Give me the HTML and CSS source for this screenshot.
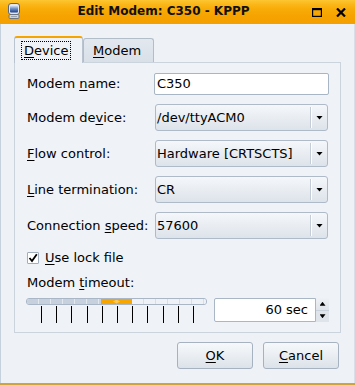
FILE: index.html
```html
<!DOCTYPE html>
<html>
<head>
<meta charset="utf-8">
<title>Edit Modem: C350 - KPPP</title>
<link rel="stylesheet" href="styles.css">
</head>
<body>
<div class="window">
  <div class="titlebar">
    <svg class="appicon" width="12" height="16" viewBox="0 0 12 16">
      <defs>
        <linearGradient id="scr" x1="0" y1="0" x2="0" y2="1">
          <stop offset="0" stop-color="#dfe8f4"/>
          <stop offset="0.45" stop-color="#6f8fc4"/>
          <stop offset="1" stop-color="#1d3f8a"/>
        </linearGradient>
      </defs>
      <rect x="0.5" y="0.5" width="11" height="11" rx="2.5" fill="#e4e7ec" stroke="#5d6675"/>
      <rect x="2" y="2.5" width="8" height="7" rx="1" fill="url(#scr)"/>
      <rect x="1" y="11.5" width="10" height="4" rx="1" fill="#cfd4db" stroke="#6c7482"/>
      <rect x="3" y="13" width="6" height="1" fill="#9aa2ae"/>
    </svg>
    <div class="title">Edit Modem: C350 - KPPP</div>
    <div class="wbtns">
      <svg class="wbtn" width="10" height="9" viewBox="0 0 10 9">
        <rect x="0.5" y="0.5" width="9" height="8" fill="none" stroke="#000" stroke-width="1.4"/>
        <rect x="0" y="0" width="10" height="2.2" fill="#000"/>
      </svg>
      <svg class="wbtn" width="10" height="9" viewBox="0 0 10 9">
        <path d="M1 0.5 L9 8.5 M9 0.5 L1 8.5" stroke="#000" stroke-width="2.2" fill="none"/>
      </svg>
    </div>
  </div>

  <div class="content">
    <div class="tabs">
      <div class="tab active"><span class="tabtext focus"><u>D</u>evice</span></div>
      <div class="tab"><span class="tabtext"><u>M</u>odem</span></div>
    </div>

    <div class="panel">
      <div class="form">
        <label class="lbl">Modem <u>n</u>ame:</label>
        <div class="input">C350</div>

        <label class="lbl">Modem de<u>v</u>ice:</label>
        <div class="combo"><span class="ctext">/dev/ttyACM0</span><span class="sep"></span><span class="arrow"></span></div>

        <label class="lbl"><u>F</u>low control:</label>
        <div class="combo"><span class="ctext">Hardware [CRTSCTS]</span><span class="sep"></span><span class="arrow"></span></div>

        <label class="lbl"><u>L</u>ine termination:</label>
        <div class="combo"><span class="ctext">CR</span><span class="sep"></span><span class="arrow"></span></div>

        <label class="lbl">Connection <u>s</u>peed:</label>
        <div class="combo"><span class="ctext">57600</span><span class="sep"></span><span class="arrow"></span></div>
      </div>

      <div class="check">
        <span class="box">
          <svg width="10" height="10" viewBox="0 0 10 10"><path d="M1.5 5 L4 8 L8.8 1.2" stroke="#000" stroke-width="1.8" fill="none"/></svg>
        </span>
        <span><u>U</u>se lock file</span>
      </div>

      <div class="tlabel">Modem <u>t</u>imeout:</div>

      <div class="sliderrow">
        <div class="slider">
          <div class="groove">
            <div class="fill"></div>
            <div class="handle"></div>
            <div class="rest"></div>
          </div>
          <div class="ticks">
            <i></i><i></i><i></i><i></i><i></i><i></i><i></i><i></i><i></i><i></i><i></i>
          </div>
        </div>
        <div class="spin">
          <div class="spinfield">60 sec</div>
          <div class="spinbtns">
            <div class="sb"><span class="up"></span></div>
            <div class="sb"><span class="down"></span></div>
          </div>
        </div>
      </div>
    </div>

    <div class="buttons">
      <div class="btn"><u>O</u>K</div>
      <div class="btn"><u>C</u>ancel</div>
    </div>
  </div>
</div>
</body>
</html>
```

FILE: styles.css
```css
* { box-sizing: border-box; }

html, body {
  margin: 0;
  padding: 0;
}

body {
  width: 355px;
  height: 385px;
  overflow: hidden;
  font-family: "DejaVu Sans", "Noto Sans", sans-serif;
  font-size: 13px;
  color: #000;
  background: #eef1f6;
}

u {
  text-decoration: underline;
  text-underline-offset: 2px;
  text-decoration-thickness: 1px;
}

.window {
  width: 355px;
  height: 385px;
  display: flex;
  flex-direction: column;
  background: #eef1f6;
  border-bottom: 2px solid #d0a43c;
}

/* ---------- title bar ---------- */
.titlebar {
  height: 24px;
  flex: none;
  display: flex;
  align-items: flex-start;
  padding: 0 8px 0 8px;
  background: linear-gradient(to bottom, #fdc631 0px, #fbb81a 4px, #f8ab07 9px, #f6a300 16px, #f4a000 24px);
}

.appicon {
  margin-top: 3px;
  flex: none;
}

.title {
  flex: 1;
  text-align: center;
  font-weight: bold;
  font-size: 12px;
  line-height: 22px;
  color: #111;
  padding-left: 2px;
}

.wbtns {
  width: 42px;
  flex: none;
  display: flex;
  align-items: center;
  gap: 14px;
  padding-left: 7px;
  margin-top: 8px;
}

.wbtn { display: block; flex: none; }

/* ---------- content ---------- */
.content {
  flex: 1;
  display: flex;
  flex-direction: column;
  padding: 12px 13px 0 13px;
  border-left: 1px solid #c6d1de;
  border-right: 1px solid #d9dfe7;
}

.tabs {
  display: flex;
  align-items: flex-start;
  height: 27px;
  margin-bottom: -1px;
}

.tab {
  height: 24px;
  margin-top: 2px;
  width: 71px;
  padding-left: 6px;
  background: linear-gradient(to bottom, #e3e8ef, #d9e0e8);
  border: 1px solid #b2bdca;
  border-bottom: none;
  border-radius: 3px 3px 0 0;
  display: flex;
  align-items: center;
}

.tab.active {
  width: 69px;
  height: 27px;
  margin-top: 0;
  background: #eff2f6;
  border-color: #bac4d0;
  border-top: 2px solid #f6a500;
  position: relative;
  z-index: 1;
  padding-bottom: 1px;
}

.tabtext {
  display: inline-block;
  line-height: 17px;
  padding: 0 2px;
  border: 1px solid transparent;
}

.tabtext.focus {
  border: 1px dotted #000;
}

.panel {
  width: 327px;
  background: #eff2f6;
  border: 1px solid #cbd3dd;
  padding: 10px 10px 10px 12px;
}

.form {
  display: grid;
  grid-template-columns: 127px 175px;
  grid-template-rows: 22px repeat(4, 27px);
  row-gap: 9px;
}

.lbl {
  align-self: center;
  line-height: 16px;
  white-space: nowrap;
}

.input {
  height: 22px;
  background: #fff;
  border: 1px solid #a8b5c5;
  border-radius: 2px;
  padding-left: 2px;
  line-height: 20px;
}

.combo {
  height: 27px;
  margin: 0 1px;
  display: flex;
  align-items: center;
  border: 1px solid #afbac8;
  border-radius: 3px;
  background: linear-gradient(to bottom, #f5f7fa 0%, #eaeef3 45%, #dde3ea 100%);
}

.ctext {
  flex: 1;
  padding-left: 1px;
  line-height: 16px;
  white-space: nowrap;
}

.sep {
  width: 2px;
  height: 21px;
  border-left: 1px solid #c3ccd7;
  background: #fff;
  flex: none;
}

.arrow {
  width: 7px;
  height: 4px;
  margin: 0 4px 0 4px;
  background: #000;
  clip-path: polygon(0 0, 100% 0, 50% 100%);
  flex: none;
}

/* ---------- checkbox ---------- */
.check {
  margin-top: 11px;
  height: 16px;
  display: flex;
  align-items: center;
  line-height: 16px;
}

.box {
  width: 12px;
  height: 12px;
  background: #fff;
  border: 1px solid #9fadbd;
  border-radius: 1px;
  margin-right: 6px;
  display: flex;
  align-items: center;
  justify-content: center;
}

.box svg { display: block; }

.tlabel {
  margin-top: 9px;
  line-height: 16px;
}

/* ---------- slider ---------- */
.sliderrow {
  margin-top: 7px;
  height: 24px;
  display: flex;
  gap: 7px;
  margin-left: -1px;
}

.slider {
  width: 181px;
  flex: none;
}

.groove {
  height: 7px;
  display: flex;
  border: 1px solid #a9b6c6;
  border-radius: 3px;
  overflow: hidden;
}

.fill {
  width: 74px;
  background-color: #c7d1dd;
  background-image: repeating-linear-gradient(to right, transparent 0, transparent 11px, #e3e8ee 11px, #e3e8ee 12px);
}

.handle {
  width: 31px;
  background: #f7a600;
  display: flex;
  align-items: center;
  justify-content: center;
}

.handle::after {
  content: "";
  width: 7px;
  height: 4px;
  background: #fcc860;
  clip-path: polygon(50% 0, 100% 50%, 50% 100%, 0 50%);
}

.rest {
  flex: 1;
  background-color: #eef1f5;
  background-image: repeating-linear-gradient(to right, transparent 0, transparent 11px, #d7dee6 11px, #d7dee6 12px);
}

.ticks {
  margin-top: 1px;
  height: 17px;
  display: flex;
  justify-content: space-between;
  padding: 0 13px 0 15px;
}

.ticks i {
  display: block;
  width: 1px;
  height: 17px;
  background: #000;
}

/* ---------- spin box ---------- */
.spin {
  width: 115px;
  height: 24px;
  flex: none;
  display: flex;
}

.spinfield {
  flex: 1;
  background: #fff;
  border: 1px solid #a9b6c6;
  border-radius: 2px 0 0 2px;
  text-align: right;
  padding-right: 7px;
  line-height: 22px;
}

.spinbtns {
  width: 13px;
  display: flex;
  flex-direction: column;
  background: #dfe4eb;
}

.sb {
  flex: 1;
  display: flex;
  align-items: center;
  justify-content: center;
}

.sb:first-child {
  background: linear-gradient(to bottom, #eef1f5, #dfe4eb);
  border-bottom: 1px solid #c9d1db;
}

.up, .down {
  width: 6px;
  height: 4px;
  background: #000;
}

.up { clip-path: polygon(50% 0, 100% 100%, 0 100%); }
.down { clip-path: polygon(0 0, 100% 0, 50% 100%); }

/* ---------- buttons ---------- */
.buttons {
  margin-top: 9px;
  display: flex;
  justify-content: flex-end;
  gap: 10px;
  padding-right: 2px;
}

.btn {
  width: 76px;
  height: 27px;
  border: 1px solid #a7b2c0;
  border-radius: 3px;
  background: linear-gradient(to bottom, #f6f8fa 0%, #eaeef3 50%, #dce2e9 100%);
  text-align: center;
  line-height: 25px;
}
```
